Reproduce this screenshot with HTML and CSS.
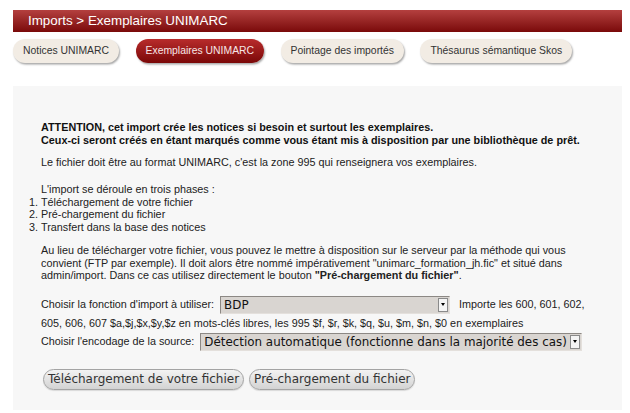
FILE: index.html
```html
<!DOCTYPE html>
<html lang="fr">
<head>
<meta charset="utf-8">
<title>Imports &gt; Exemplaires UNIMARC</title>
<link rel="stylesheet" href="styles.css">
</head>
<body>
<div class="page">
  <div class="titlebar">Imports &gt; Exemplaires UNIMARC</div>
  <nav class="tabs">
    <a class="tab">Notices UNIMARC</a>
    <a class="tab active">Exemplaires UNIMARC</a>
    <a class="tab">Pointage des importés</a>
    <a class="tab">Thésaurus sémantique Skos</a>
  </nav>
  <div class="panel">
    <p class="warn">ATTENTION, cet import crée les notices si besoin et surtout les exemplaires.<br>Ceux-ci seront créés en étant marqués comme vous étant mis à disposition par une bibliothèque de prêt.</p>
    <p class="para">Le fichier doit être au format UNIMARC, c'est la zone 995 qui renseignera vos exemplaires.</p>
    <p class="intro">L'import se déroule en trois phases :</p>
    <ol class="phases">
      <li>Téléchargement de votre fichier</li>
      <li>Pré-chargement du fichier</li>
      <li>Transfert dans la base des notices</li>
    </ol>
    <p class="para-ftp">Au lieu de télécharger votre fichier, vous pouvez le mettre à disposition sur le serveur par la méthode qui vous convient (FTP par exemple). Il doit alors être nommé impérativement "unimarc_formation_jh.fic" et situé dans admin/import. Dans ce cas utilisez directement le bouton <b>"Pré-chargement du fichier"</b>.</p>
    <div class="form-row first">Choisir la fonction d'import à utiliser: <span class="select select-func"><select><option>BDP</option></select><span class="arrow"></span></span>Importe les 600, 601, 602, 605, 606, 607 $a,$j,$x,$y,$z en mots-clés libres, les 995 $f, $r, $k, $q, $u, $m, $n, $0 en exemplaires</div>
    <div class="form-row">Choisir l'encodage de la source: <span class="select select-enc"><select><option>Détection automatique (fonctionne dans la majorité des cas)</option></select><span class="arrow"></span></span></div>
    <div class="buttons">
      <button class="btn">Téléchargement de votre fichier</button>
      <button class="btn">Pré-chargement du fichier</button>
    </div>
  </div>
</div>
</body>
</html>
```
FILE: styles.css
```css
html, body {
  margin: 0;
  padding: 0;
  background: #fff;
}
body {
  font-family: "Liberation Sans", Arial, sans-serif;
  font-size: 10.8px;
  line-height: 12.5px;
  color: #222;
}
.page {
  padding: 10px 8px 3px 13px;
}
.titlebar {
  height: 22px;
  line-height: 22px;
  padding-left: 15px;
  font-size: 13.4px;
  color: #fff;
  background: linear-gradient(#b4403f, #7a0a0a);
}
.tabs {
  display: flex;
  gap: 16.5px;
  margin-top: 7px;
}
.tab {
  display: block;
  height: 24px;
  line-height: 24px;
  padding: 0 10px;
  border-radius: 12px;
  font-size: 10.4px;
  color: #333;
  background: #f2ece4;
  box-shadow: 1px 1.5px 2px rgba(0, 0, 0, 0.35);
}
.tab.active {
  color: #f6e6e6;
  background: linear-gradient(#b82c2c, #7a0808);
}
.panel {
  margin-top: 23px;
  height: 324px;
  box-sizing: border-box;
  padding: 35px 28px 0 28px;
  background: #f7f7f7;
}
p {
  margin: 0;
}
.warn {
  font-weight: bold;
  color: #111;
}
.para {
  margin-top: 10px;
}
.intro {
  margin-top: 14.5px;
}
.phases {
  margin: 0;
  padding: 0;
}
.para-ftp {
  margin-top: 11px;
}
.form-row {
  line-height: 18px;
}
.form-row.first {
  margin-top: 13px;
}
.select {
  display: inline-flex;
  align-items: center;
  vertical-align: middle;
  box-sizing: border-box;
  height: 18px;
  border: 1px solid;
  border-color: #8c8884 #e4e0dc #e4e0dc #8c8884;
  background: #d9d5d1;
}
.select select {
  appearance: none;
  -webkit-appearance: none;
  flex: 1;
  min-width: 0;
  height: 16px;
  border: 0;
  margin: 0;
  padding: 0 0 0 3px;
  background: transparent;
  font-family: "DejaVu Sans", sans-serif;
  font-size: 11.9px;
  color: #111;
}
.select-func {
  width: 230px;
  margin-left: 3px;
  margin-right: 9px;
}
.select-enc {
  width: 382px;
  margin-left: 3px;
}
.arrow {
  position: relative;
  flex: none;
  box-sizing: border-box;
  width: 10px;
  height: 14px;
  margin-right: 1px;
  border: 1px solid #8a8a8a;
  background: #f4f4f4;
}
.arrow::before {
  content: "";
  position: absolute;
  left: 1.5px;
  top: 4px;
  border-left: 2.5px solid transparent;
  border-right: 2.5px solid transparent;
  border-top: 3px solid #000;
}
.buttons {
  display: flex;
  gap: 5px;
  margin-top: 18px;
  margin-left: 2px;
}
.btn {
  height: 21px;
  padding: 0 4px;
  border: 1px solid #a4a4a4;
  border-radius: 11px;
  background: linear-gradient(#f3f3f3, #d3d3d3);
  box-shadow: 0 1px 1px rgba(0, 0, 0, 0.12);
  font-family: "DejaVu Sans", sans-serif;
  font-size: 12px;
  color: #333;
}
```
